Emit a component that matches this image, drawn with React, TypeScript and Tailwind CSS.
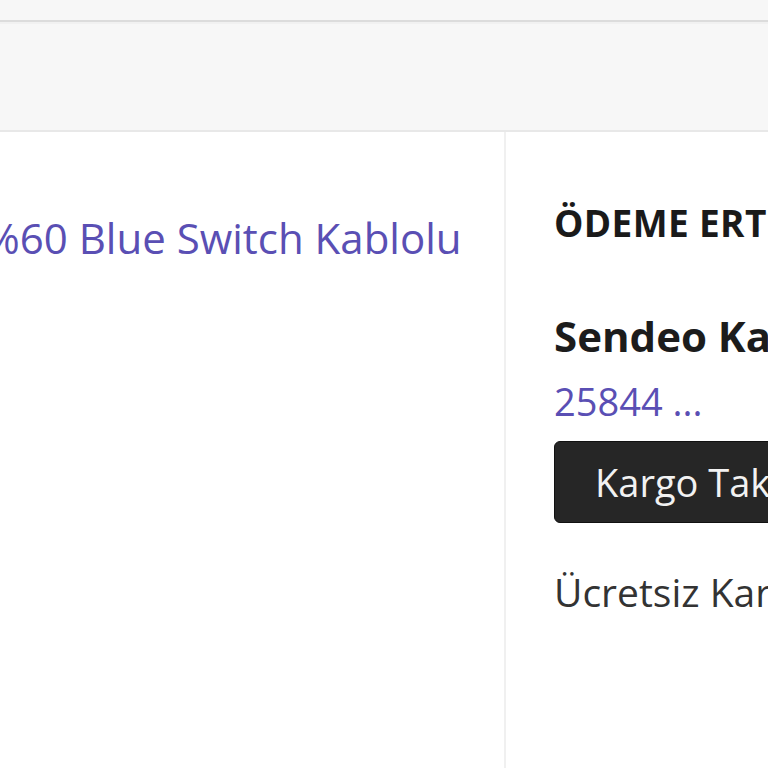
import React from 'react';

const font = { fontFamily: '"Open Sans", "Noto Sans", sans-serif' };

export default function App() {
  return (
    <div className="relative h-[768px] w-[768px] overflow-hidden bg-white" style={font}>
      {/* top bar */}
      <div className="h-[20px] bg-[#f7f7f7]" />
      <div className="h-[2px] bg-[#dcdcdc]" />
      <div className="h-[110px] border-t-[2px] border-b-[2px] border-t-[#f1f1f1] border-b-[#e8e8e8] bg-[#f7f7f7]" />

      <div className="flex">
        {/* left: ordered product */}
        <div className="h-[640px] w-[506px] shrink-0 border-r-2 border-[#f0f0f0] pt-[76px]">
          <a className="ml-[-15px] block whitespace-nowrap text-[42px] leading-[60px] text-[#5a4fb4]">
            %60 Blue Switch Kablolu
          </a>
        </div>

        {/* right: shipment info */}
        <div className="flex min-w-[600px] flex-col whitespace-nowrap pl-[48px] pt-[65px]">
          <h3 className="text-[37px] font-bold uppercase leading-[52px] tracking-[0.01em] text-[#1a1a1a]">
            ÖDEME ERTELENDİ
          </h3>
          <div className="mt-[59px] text-[42px] font-bold leading-[56px] text-[#1c1c1c]">Sendeo Kargo</div>
          <a className="mt-[9px] text-[38px] leading-[56px] text-[#5a4fb4]">25844 ...</a>
          <button className="mt-[12px] flex h-[82px] w-[300px] items-center rounded-[6px] border border-[#111] bg-[#262626] pl-[40px] text-[38px] text-[#f2f2f2]">
            Kargo Takip
          </button>
          <p className="mt-[41px] text-[39px] leading-[56px] text-[#333]">Ücretsiz Kargo</p>
        </div>
      </div>
    </div>
  );
}
